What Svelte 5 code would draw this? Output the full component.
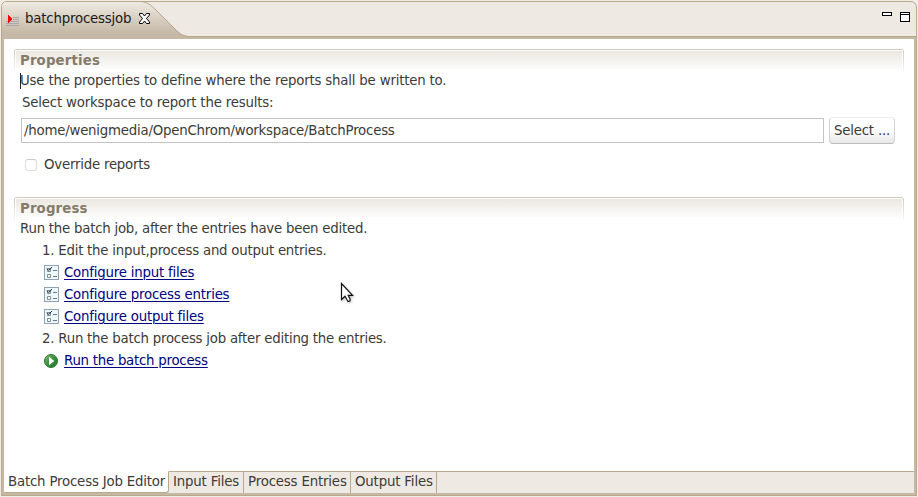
<script>
  const links = ['Configure input files', 'Configure process entries', 'Configure output files'];
  const tabs = ['Input Files', 'Process Entries', 'Output Files'];
  const widths = [75, 107, 86];
</script>

{#snippet formIcon()}
  <svg class="icon" width="16" height="16" viewBox="0 0 16 16">
    <rect x="1.5" y="1.5" width="14" height="14" fill="#edf8fc" stroke="#8fa3b8" />
    <path d="M4.5 4.5h3v3h-3zM4.5 10.5h3v3h-3z" fill="#fff" stroke="#7c8d98" />
    <path d="M10 6.5h4M10 12.5h4" stroke="#66788a" />
    <path d="M4 4.5l1.7 2L9 3" fill="none" stroke="#152b38" />
  </svg>
{/snippet}

<main class="editor">
  <header>
    <svg class="tabshape" width="917" height="39" viewBox="0 0 917 39">
      <defs>
        <linearGradient id="tab" x1="0" y1="0" x2="0" y2="1">
          <stop offset="0" stop-color="#eeeae3" />
          <stop offset=".85" stop-color="#c5b8a5" />
          <stop offset="1" stop-color="#c5b8a5" />
        </linearGradient>
      </defs>
      <path d="M1.5 39V7Q1.5 1.5 7 1.5H910Q916.5 1.5 916.5 8V39" fill="#eeeae3" stroke="#b8a98c" />
      <path d="M2 37H916V39H2Z" fill="#c5b8a5" />
      <path d="M2 39V7Q2 2 7 2H141C147 2 151 5 156 10L174 28C180 34 183 36 190 36V39Z" fill="url(#tab)" />
      <path d="M141 1.5C147 2 151 5 156 10L174 28C180 34 183 36.5 190 36.5H916" fill="none" stroke="#b8a98c" />
    </svg>
    <div class="title">
      <svg width="16" height="16" viewBox="0 0 16 16" shape-rendering="crispEdges">
        <path d="M7 6.5h6M7 8.5h6M0 10.5h13M0 12.5h13M0 14.5h13" stroke="#aaa6aa" />
        <path d="M2 4V12L6.5 8Z" fill="#f00" />
      </svg>
      <span class="name">batchprocessjob</span>
      <svg class="close" width="11" height="11" viewBox="0 0 11 11">
        <path d="M.5.5h3L5.5 3 7.5.5h3V2L7.5 5.5l3 3.5v1.5h-3L5.5 8l-2 2.5h-3V9l3-3.5L.5 2Z" fill="#fff" stroke="#000" />
      </svg>
    </div>
    <svg class="controls" width="29" height="12" viewBox="0 0 29 12" shape-rendering="crispEdges">
      <path d="M.5 1.5h9v3h-9zM18.5 1.5h9v9h-9zM18 3.5h10" fill="#fff" stroke="#000" />
    </svg>
  </header>

  <div class="body">
    <section>
      <h2>Properties</h2>
      <p class="caret intro">Use the properties to define where the reports shall be written to.</p>
      <p class="label">Select workspace to report the results:</p>
      <div class="field">
        <div class="input">/home/wenigmedia/OpenChrom/workspace/BatchProcess</div>
        <button>Select ...</button>
      </div>
      <div class="check"><i></i><span>Override reports</span></div>
    </section>
    <section>
      <h2>Progress</h2>
      <p class="after">Run the batch job, after the entries have been edited.</p>
      <p class="step">1. Edit the input,process and output entries.</p>
      {#each links as link}
        <p class="link">{@render formIcon()}<a href="#top">{link}</a></p>
      {/each}
      <p class="step">2. Run the batch process job after editing the entries.</p>
      <p class="link run">
        <svg class="icon" width="16" height="16" viewBox="0 0 16 16">
          <defs>
            <linearGradient id="run" x1="0" y1="0" x2="1" y2="1">
              <stop offset="0" stop-color="#85bd78" />
              <stop offset=".5" stop-color="#36933b" />
              <stop offset="1" stop-color="#24762d" />
            </linearGradient>
          </defs>
          <circle cx="8" cy="9" r="6.5" fill="url(#run)" stroke="#2c7237" />
          <path d="M6 4.8V13.2L11.3 9Z" fill="#fff" />
        </svg><a href="#top">Run the batch process</a>
      </p>
    </section>
  </div>

  <footer>
    <div class="tab active">Batch Process Job Editor</div>
    {#each tabs as tab, i}
      <div class="tab" style="width:{widths[i]}px">{tab}</div>
    {/each}
  </footer>
  <svg class="pointer" width="16" height="22" viewBox="0 0 16 22">
    <path d="M1.5 1.5V17.5L5 14.2 8 19.5Q10.5 19.5 10 17L8.2 13.3H12.5Z" fill="#fff" stroke="#111" stroke-width="1.2" />
  </svg>
</main>

<style>
  :global(body) { margin: 0; background: #f1ede6; overflow: hidden; }
  .editor {
    position: relative; box-sizing: border-box; width: 918px; height: 497px;
    display: flex; flex-direction: column;
    font: 13.33px/22px "DejaVu Sans", sans-serif; letter-spacing: -.22px; color: #3c3b37;
    white-space: nowrap;
  }
  header { height: 39px; position: relative; display: flex; justify-content: space-between; flex: none; }
  .tabshape { position: absolute; left: 0; top: 0; }
  .title { position: relative; display: flex; margin: 8px 0 0 6px; height: 22px; color: #1a1a1a; }
  .title > svg:first-child { margin-top: 3px; }
  .name { margin-left: 3px; width: 114px; letter-spacing: -.19px; }
  .close { margin-top: 5px; }
  .controls { position: relative; margin: 11px 7px 0 0; }
  .body {
    flex: 1; background: #fff; margin-right: 1px; margin-left: 1px;
    border: solid #b8a98c; border-width: 0 1px;
    box-shadow: inset 2px 0 #c5b8a5, inset -2px 0 #c5b8a5;
    padding: 10px 12px 0;
  }
  section { height: 148px; }
  h2 {
    box-sizing: border-box; position: relative; width: 890px; height: 20px; margin: 0;
    padding-left: 6px; border-top: 1px solid #cfcac0; border-radius: 3px 3px 0 0;
    background: linear-gradient(#ebe8e2, #fcfcfa) 2px 1px / 886px 18px no-repeat;
    font: bold 13.33px/21px "DejaVu Sans", sans-serif; color: #857b6b; letter-spacing: .14px;
  }
  h2::before, h2::after {
    content: ""; position: absolute; top: 1px; left: 0; width: 1px; height: 23px;
    background: linear-gradient(#cfcac0, #fff);
  }
  h2::after { left: auto; right: 0; }
  p { margin: 0; height: 22px; padding-left: 6px; line-height: 24px; }
  .intro { letter-spacing: -.19px; }
  .after { letter-spacing: -.235px; }
  .caret { position: relative; }
  .caret::before { content: ""; position: absolute; left: 6px; top: 4px; width: 1px; height: 16px; background: #222; }
  .label { padding-left: 8px; letter-spacing: -.19px; }
  .field { display: flex; align-items: center; height: 27px; margin: 4px 0 0 7px; gap: 5px; }
  .input { box-sizing: border-box; width: 803px; height: 25px; border: 1px solid #c4c4c4; padding: 0 2px; line-height: 23px; }
  button {
    box-sizing: border-box; width: 66px; height: 27px; padding: 1px 0 0;
    border: 1px solid #d4d4d4; border-top-color: #eee; border-bottom-color: #bcbcbc; border-radius: 4px;
    background: linear-gradient(#fff 40%, #e8e8e8); color: inherit; font: inherit; letter-spacing: inherit;
  }
  .check { display: flex; height: 22px; margin: 9px 0 0 11px; line-height: 24px; }
  .check i {
    box-sizing: border-box; width: 12px; height: 12px; margin: 6px 7px 0 0;
    border: 1px solid #ddd; border-top-color: #ccc; border-radius: 3px;
  }
  .step { padding-left: 28px; letter-spacing: -.235px; }
  .link { display: flex; padding-left: 29px; letter-spacing: -.205px; }
  .run { letter-spacing: -.25px; }
  .icon { margin: 3px 5px 0 0; flex: none; }
  a { color: #000080; text-decoration: underline; text-underline-offset: 2px; text-decoration-thickness: 1px; }
  footer {
    box-sizing: border-box; flex: none; height: 25px; margin: 0 1px 1px; display: flex;
    border: 1px solid #b8a98c; border-top: 0; background: #eeeae3;
    box-shadow: inset 2px 0 #c5b8a5, inset -2px -2px #c5b8a5;
    padding: 0 2px 2px; letter-spacing: -.17px;
  }
  .tab { box-sizing: border-box; height: 22px; padding-left: 4px; line-height: 20px; border: solid #b8a98c; border-width: 1px 1px 0 0; }
  .tab.active { width: 165px; background: #fff; border-top-color: #fff; border-bottom: 1px solid #b8a98c; border-bottom-right-radius: 3px; letter-spacing: -.19px; }
  footer::after { content: ""; flex: 1; height: 1px; background: #b8a98c; }
  .pointer { position: absolute; left: 340px; top: 282px; filter: drop-shadow(1px 1px 1px #0004); }
</style>
